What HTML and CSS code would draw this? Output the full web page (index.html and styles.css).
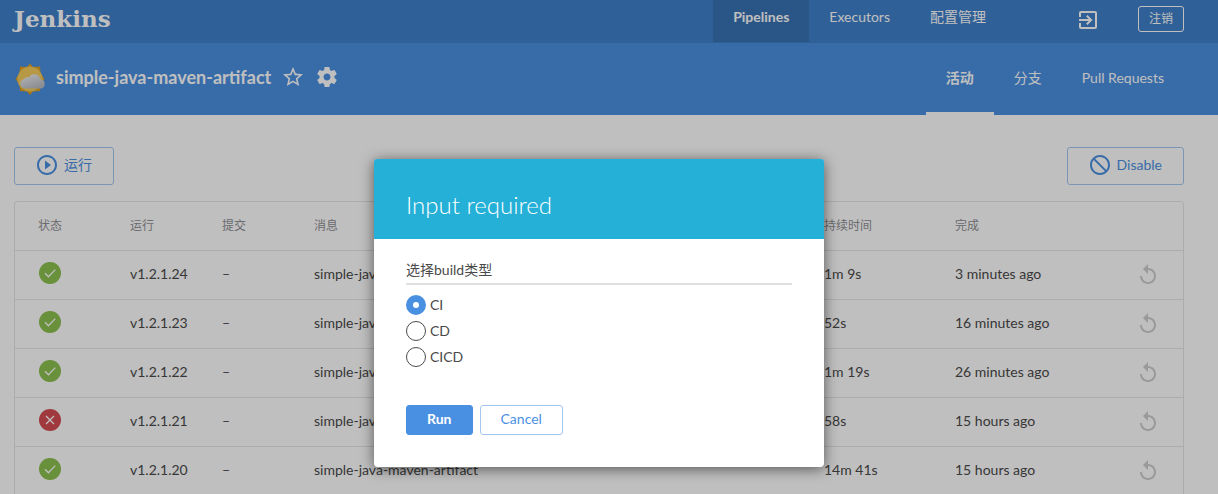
FILE: index.html
```html
<!DOCTYPE html>
<html lang="zh-CN">
<head>
<meta charset="utf-8">
<title>Jenkins</title>
<link rel="stylesheet" href="styles.css">
</head>
<body>
<svg class="sprite" aria-hidden="true">
  <symbol id="ok" viewBox="0 0 22 22"><circle cx="11" cy="11" r="11" fill="#8cc04f"/><path d="M6 11.3l3.4 3.4L16.3 7.6" fill="none" stroke="#fff" stroke-width="1.3"/></symbol>
  <symbol id="fail" viewBox="0 0 22 22"><circle cx="11" cy="11" r="11" fill="#d54c53"/><path d="M7 7l8 8M15 7l-8 8" fill="none" stroke="#fff" stroke-width="1.3"/></symbol>
  <symbol id="replay" viewBox="0 0 24 24"><path d="M12 5V1L7 6l5 5V7c3.31 0 6 2.69 6 6s-2.69 6-6 6-6-2.69-6-6H4c0 4.42 3.58 8 8 8s8-3.58 8-8-3.58-8-8-8z"/></symbol>
</svg>
<div class="page">
  <header class="topbar">
    <a class="logo" href="#">Jenkins</a>
    <nav class="nav">
      <a class="nav-link active" href="#">Pipelines</a>
      <a class="nav-link" href="#">Executors</a>
      <a class="nav-link" href="#">配置管理</a>
    </nav>
    <a class="exit" href="#" aria-label="Exit"><svg class="icon" viewBox="0 0 24 24"><path d="M10.09 15.59L11.5 17l5-5-5-5-1.41 1.41L12.67 11H3v2h9.67l-2.58 2.59zM19 3H5c-1.11 0-2 .9-2 2v4h2V5h14v14H5v-4H3v4c0 1.1.89 2 2 2h14c1.1 0 2-.9 2-2V5c0-1.1-.9-2-2-2z"/></svg></a>
    <button class="logout" type="button">注销</button>
  </header>
  <div class="project">
    <svg class="weather" viewBox="0 0 32 32" aria-hidden="true">
      <defs><linearGradient id="cloud" x1="0" y1="0" x2="0.6" y2="1"><stop offset="0" stop-color="#f4f4f4"/><stop offset="1" stop-color="#b9bcc2"/></linearGradient></defs>
      <path d="M16 .5l3 3.500 7-.5.500 7 4 5.500-4 5.500-.5 6.500-7 .5-3 3.500-3-3.500-7-.5-.500-6.500-4-5.500 4-5.500.5-7 7 .5z" fill="#e0a021"/>
      <circle cx="16" cy="16" r="12.500" fill="#f3cb5c"/>
      <path d="M11 25.500a4.800 4.800 0 0 1-.8-9.500 4 4 0 0 1 4.800-1.600 6 6 0 0 1 11.200 1.800 4.700 4.700 0 0 1 .8 9.300z" fill="url(#cloud)"/>
    </svg>
    <h1 class="project-name">simple-java-maven-artifact</h1>
    <button class="icon-button" type="button" aria-label="Favorite"><svg class="icon" viewBox="0 0 24 24"><path d="M22 9.240l-7.190-.62L12 2 9.190 8.630 2 9.240l5.460 4.730L5.820 21 12 17.270 18.180 21l-1.630-7.030L22 9.240zM12 15.400l-3.760 2.270 1-4.280-3.320-2.880 4.380-.38L12 6.100l1.710 4.040 4.380.38-3.320 2.880 1 4.280L12 15.400z"/></svg></button>
    <button class="icon-button" type="button" aria-label="Settings"><svg class="icon" viewBox="0 0 24 24"><path d="M19.430 12.980c.04-.32.07-.64.07-.98s-.03-.66-.07-.98l2.110-1.650c.19-.15.24-.42.12-.64l-2-3.460c-.12-.22-.39-.3-.61-.22l-2.490 1c-.52-.4-1.080-.73-1.690-.98l-.38-2.650C14.460 2.180 14.250 2 14 2h-4c-.25 0-.46.18-.49.42l-.38 2.650c-.61.25-1.170.59-1.690.98l-2.490-1c-.23-.09-.49 0-.61.22l-2 3.460c-.13.22-.07.49.12.64l2.110 1.650c-.04.32-.07.65-.07.98s.03.66.07.98l-2.110 1.650c-.19.15-.24.42-.12.64l2 3.460c.12.22.39.3.61.22l2.490-1c.52.4 1.080.73 1.690.98l.38 2.650c.03.24.24.42.49.42h4c.25 0 .46-.18.49-.42l.38-2.650c.61-.25 1.170-.59 1.690-.98l2.490 1c.23.09.49 0 .61-.22l2-3.460c.12-.22.07-.49-.12-.64l-2.110-1.650zM12 15.500c-1.930 0-3.500-1.570-3.500-3.500s1.570-3.500 3.500-3.500 3.500 1.570 3.500 3.500-1.570 3.500-3.500 3.500z"/></svg></button>
    <nav class="tabs">
      <a class="tab active" href="#">活动</a>
      <a class="tab" href="#">分支</a>
      <a class="tab" href="#">Pull Requests</a>
    </nav>
  </div>
  <main class="content">
    <div class="actions">
      <button class="action" type="button"><svg class="icon" viewBox="0 0 24 24"><path d="M10 16.500l6-4.500-6-4.500v9zM12 2C6.480 2 2 6.480 2 12s4.480 10 10 10 10-4.480 10-10S17.520 2 12 2zm0 18c-4.410 0-8-3.590-8-8s3.590-8 8-8 8 3.590 8 8-3.590 8-8 8z"/></svg>运行</button>
      <button class="action" type="button"><svg class="icon" viewBox="0 0 24 24"><path d="M12 2C6.480 2 2 6.480 2 12s4.480 10 10 10 10-4.480 10-10S17.520 2 12 2zM4 12c0-4.420 3.580-8 8-8 1.850 0 3.550.63 4.900 1.690L5.690 16.900C4.630 15.550 4 13.850 4 12zm8 8c-1.850 0-3.550-.63-4.900-1.690L18.310 7.100C19.370 8.450 20 10.150 20 12c0 4.420-3.580 8-8 8z" transform="matrix(-1 0 0 1 24 0)"/></svg>Disable</button>
    </div>
    <table class="runs">
      <colgroup><col class="col-short"><col class="col-short"><col class="col-short"><col><col class="col-duration"><col class="col-completed"><col class="col-replay"></colgroup>
      <thead><tr><th>状态</th><th>运行</th><th>提交</th><th>消息</th><th>持续时间</th><th>完成</th><th></th></tr></thead>
      <tbody>
        <tr><td><svg class="status" role="img" aria-label="Success"><use href="#ok"/></svg></td><td>v1.2.1.24</td><td>–</td><td>simple-java-maven-artifact</td><td>1m 9s</td><td>3 minutes ago</td><td><button class="replay" type="button" aria-label="Replay"><svg class="icon"><use href="#replay"/></svg></button></td></tr>
        <tr><td><svg class="status" role="img" aria-label="Success"><use href="#ok"/></svg></td><td>v1.2.1.23</td><td>–</td><td>simple-java-maven-artifact</td><td>52s</td><td>16 minutes ago</td><td><button class="replay" type="button" aria-label="Replay"><svg class="icon"><use href="#replay"/></svg></button></td></tr>
        <tr><td><svg class="status" role="img" aria-label="Success"><use href="#ok"/></svg></td><td>v1.2.1.22</td><td>–</td><td>simple-java-maven-artifact</td><td>1m 19s</td><td>26 minutes ago</td><td><button class="replay" type="button" aria-label="Replay"><svg class="icon"><use href="#replay"/></svg></button></td></tr>
        <tr><td><svg class="status" role="img" aria-label="Failure"><use href="#fail"/></svg></td><td>v1.2.1.21</td><td>–</td><td>simple-java-maven-artifact</td><td>58s</td><td>15 hours ago</td><td><button class="replay" type="button" aria-label="Replay"><svg class="icon"><use href="#replay"/></svg></button></td></tr>
        <tr><td><svg class="status" role="img" aria-label="Success"><use href="#ok"/></svg></td><td>v1.2.1.20</td><td>–</td><td>simple-java-maven-artifact</td><td>14m 41s</td><td>15 hours ago</td><td><button class="replay" type="button" aria-label="Replay"><svg class="icon"><use href="#replay"/></svg></button></td></tr>
      </tbody>
    </table>
  </main>
</div>
<div class="overlay">
  <form class="dialog" role="dialog" aria-labelledby="dialog-title">
    <h2 class="dialog-title" id="dialog-title">Input required</h2>
    <div class="dialog-body">
      <fieldset class="choices">
        <legend class="choices-title">选择build类型</legend>
        <label class="choice"><input class="radio" type="radio" name="build" checked>CI</label>
        <label class="choice"><input class="radio" type="radio" name="build">CD</label>
        <label class="choice"><input class="radio" type="radio" name="build">CICD</label>
      </fieldset>
      <div class="dialog-buttons">
        <button class="button primary" type="button">Run</button>
        <button class="button" type="button">Cancel</button>
      </div>
    </div>
  </form>
</div>
</body>
</html>
```
FILE: styles.css
```css
* { box-sizing: border-box; }

body {
  margin: 0;
  height: 100vh;
  overflow: hidden;
  position: relative;
  background: #fff;
  color: #4a4a4a;
  font: 14px/20px Lato, "Noto Sans CJK SC", sans-serif;
}

a { color: inherit; text-decoration: none; }
button { font: inherit; color: inherit; background: none; border: 0; padding: 0; }
.sprite { display: none; }
.icon { display: block; width: 24px; height: 24px; fill: currentColor; }

.topbar {
  display: flex;
  align-items: flex-start;
  height: 43px;
  padding: 0 34px 0 14px;
  background: #4180cb;
  color: #fff;
}
.logo {
  margin-right: auto;
  font: bold 23px/38px "DejaVu Serif", serif;
}
.nav { display: flex; }
.nav-link { height: 42px; padding: 7px 20px; }
.nav-link.active { background: #3973b5; font-weight: bold; }
.exit { margin: 8px 38px 0 70px; }
.logout {
  width: 46px;
  height: 26px;
  margin-top: 6px;
  border: 1px solid #fff;
  border-radius: 3px;
  font-size: 12px;
}

.project {
  display: flex;
  align-items: center;
  height: 72px;
  padding: 0 34px 0 14px;
  background: #4a90e2;
  color: #fff;
}
.weather { width: 32px; height: 32px; margin-right: 10px; }
.project-name { margin: 0; font-size: 18px; line-height: 24px; padding-bottom: 4px; }
.icon-button { margin: 0 0 4px 10px; }
.tabs { display: flex; align-self: stretch; margin-left: auto; }
.tab { padding: 25px 20px 0; border-bottom: 3px solid transparent; }
.tab.active { border-color: #fff; font-weight: bold; }

.content { padding: 32px 34px 0 14px; }
.actions { display: flex; justify-content: space-between; margin-bottom: 16px; }
.action {
  display: flex;
  align-items: center;
  gap: 5px;
  height: 38px;
  padding: 0 21px 2px 20px;
  border: 1px solid #a4c7f0;
  border-radius: 3px;
  color: #4a90e2;
}

.runs {
  width: 100%;
  table-layout: fixed;
  border-spacing: 0;
  border: 1px solid #e6e6e6;
  border-radius: 3px;
}
.col-short { width: 92px; }
.col-duration { width: 131px; }
.col-completed { width: 170px; }
.col-replay { width: 81px; }
.runs th, .runs td { height: 49px; padding: 0 0 0 23px; border-bottom: 1px solid #e6e6e6; text-align: left; white-space: nowrap; }
.runs td { padding-bottom: 2px; }
.runs th { color: #8f8f94; font-size: 12px; font-weight: normal; }
.status { display: block; width: 22px; height: 22px; margin: 0 0 2px 1px; }
.replay { display: block; margin: 2px 0 0 11px; color: #ccc; }

.overlay {
  position: absolute;
  inset: 0;
  padding: 159px 20px 0 0;
  background: rgba(0, 0, 0, 0.25);
}
.dialog {
  width: 450px;
  margin: 0 auto;
  border-radius: 4px;
  background: #fff;
  box-shadow: 0 2px 14px rgba(0, 0, 0, 0.55);
}
.dialog-title {
  margin: 0;
  padding: 30px 32px 18px;
  border-radius: 3px 3px 0 0;
  background: #24b0d7;
  color: #fff;
  font-size: 24px;
  font-weight: 300;
  line-height: 32px;
}
.dialog-body { padding: 21px 32px 32px; }
.choices { margin: 0; padding: 0; border: 0; }
.choices-title { width: 100%; padding: 0 0 3px; margin-bottom: 10px; border-bottom: 2px solid #e0e0e0; }
.choice { display: flex; align-items: center; gap: 4px; height: 20px; margin-bottom: 6px; }
.radio {
  appearance: none;
  width: 20px;
  height: 20px;
  margin: 0;
  border: 1px solid #4a4a4a;
  border-radius: 50%;
  background: #fff;
}
.radio:checked { border: 7px solid #4a90e2; }
.dialog-buttons { display: flex; gap: 7px; padding-top: 32px; }
.button {
  height: 30px;
  padding: 0 20px 2px;
  border: 1px solid #a4c7f0;
  border-radius: 3px;
  color: #4a90e2;
}
.button.primary { border-color: #4a90e2; background: #4a90e2; color: #fff; font-weight: bold; }
```
